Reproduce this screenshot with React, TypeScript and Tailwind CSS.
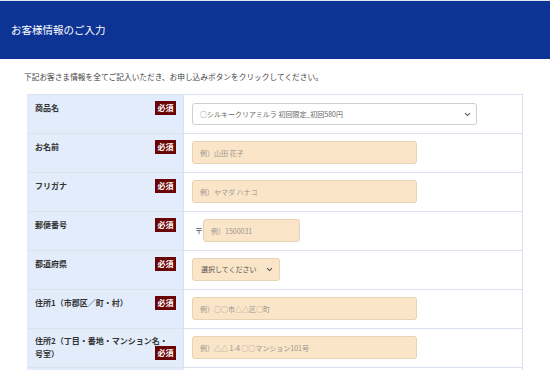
import React from "react";

const FONT = { fontFamily: '"Noto Sans CJK JP", "Noto Sans", sans-serif' };

function Badge() {
  return (
    <span className="inline-flex h-[14px] w-[21px] shrink-0 items-center justify-center bg-[#6b0505] text-[8px] font-bold leading-none text-white">
      必須
    </span>
  );
}

function Chevron() {
  return (
    <svg width="7" height="5" viewBox="0 0 7 5" className="shrink-0">
      <path d="M1 1.2 L3.5 3.6 L6 1.2" fill="none" stroke="#555" strokeWidth="1.1" />
    </svg>
  );
}

function Row({ label, children }: { label: React.ReactNode; children: React.ReactNode }) {
  return (
    <div className="flex h-[39px] border-b border-[#d9e2ee]">
      <div className="flex w-[157px] shrink-0 items-start justify-between border-r border-[#d9e2ee] bg-[#e2ecfb] pl-[8px] pr-[7px] pt-[6px]">
        <span className="text-[8px] font-bold leading-[14px] text-[#333]">{label}</span>
        <Badge />
      </div>
      <div className="flex flex-1 items-start bg-white pl-[8px] pt-[7px]">{children}</div>
    </div>
  );
}

function TextBox({ placeholder, w }: { placeholder: string; w: string }) {
  return (
    <input
      readOnly
      placeholder={placeholder}
      className={`${w} h-[23px] rounded-[3px] border border-[#e6d2b4] bg-[#fae5c8] pl-[7px] text-[7px] text-[#555] outline-none placeholder:text-[#9a948e]`}
    />
  );
}

export default function App() {
  return (
    <div className="min-h-[370px] w-[550px] bg-white" style={FONT}>
      <div className="h-[1px] bg-[#dfe5f2]" />
      <div className="flex h-[58px] items-center bg-[#0d3494] pl-[11px]">
        <span className="text-[10.5px] text-white">お客様情報のご入力</span>
      </div>
      <div className="pl-[24px] pt-[12px] text-[7.7px] leading-[12px] text-[#444]">
        下記お客さま情報を全てご記入いただき、お申し込みボタンをクリックしてください。
      </div>
      <div className="ml-[27px] mt-[11px] w-[496px] border-r border-t border-[#d9e2ee]">
        <div className="flex h-[39px] border-b border-[#d9e2ee]">
          <div className="flex w-[157px] shrink-0 items-start justify-between border-r border-[#d9e2ee] bg-[#e2ecfb] pl-[8px] pr-[7px] pt-[6px]">
            <span className="text-[8px] font-bold leading-[14px] text-[#333]">商品名</span>
            <Badge />
          </div>
          <div className="flex flex-1 items-start bg-white pl-[8px] pt-[8px]">
            <div className="flex h-[22px] w-[285px] items-center justify-between rounded-[3px] border border-[#cfcfcf] bg-white pl-[7px] pr-[5px]">
              <span className="text-[7px] text-[#666]">○シルキークリアミルラ 初回限定_初回580円</span>
              <Chevron />
            </div>
          </div>
        </div>
        <Row label="お名前">
          <TextBox placeholder="例）山田 花子" w="w-[225px]" />
        </Row>
        <Row label="フリガナ">
          <TextBox placeholder="例）ヤマダ ハナコ" w="w-[225px]" />
        </Row>
        <Row label="郵便番号">
          <div className="flex items-center">
            <span className="w-[11px] pl-[3px] text-[8px] text-[#555]">〒</span>
            <TextBox placeholder="例）1500031" w="w-[97px]" />
          </div>
        </Row>
        <Row label="都道府県">
          <div className="flex h-[23px] w-[88px] items-center justify-between rounded-[3px] border border-[#e6d2b4] bg-[#fae5c8] pl-[8px] pr-[6px]">
            <span className="text-[7px] text-[#555]">選択してください</span>
            <Chevron />
          </div>
        </Row>
        <Row label="住所1（市郡区／町・村）">
          <TextBox placeholder="例）○○市△△区○町" w="w-[225px]" />
        </Row>
        <div className="flex h-[39px] border-b border-[#d9e2ee]">
          <div className="flex w-[157px] shrink-0 flex-col border-r border-[#d9e2ee] bg-[#e2ecfb] pl-[8px] pr-[7px] pt-[6px]">
            <span className="text-[8px] font-bold leading-[12px] text-[#333]">住所2（丁目・番地・マンション名・</span>
            <div className="-mt-[1px] flex items-end justify-between">
              <span className="text-[8px] font-bold leading-[12px] text-[#333]">号室）</span>
              <Badge />
            </div>
          </div>
          <div className="flex flex-1 items-start bg-white pl-[8px] pt-[7px]">
            <TextBox placeholder="例）△△ 1-4 ○○マンション101号" w="w-[225px]" />
          </div>
        </div>
        <div className="flex h-[39px] border-b border-[#d9e2ee]">
          <div className="w-[157px] shrink-0 border-r border-[#d9e2ee] bg-[#e2ecfb]" />
          <div className="flex-1 bg-white" />
        </div>
      </div>
    </div>
  );
}
